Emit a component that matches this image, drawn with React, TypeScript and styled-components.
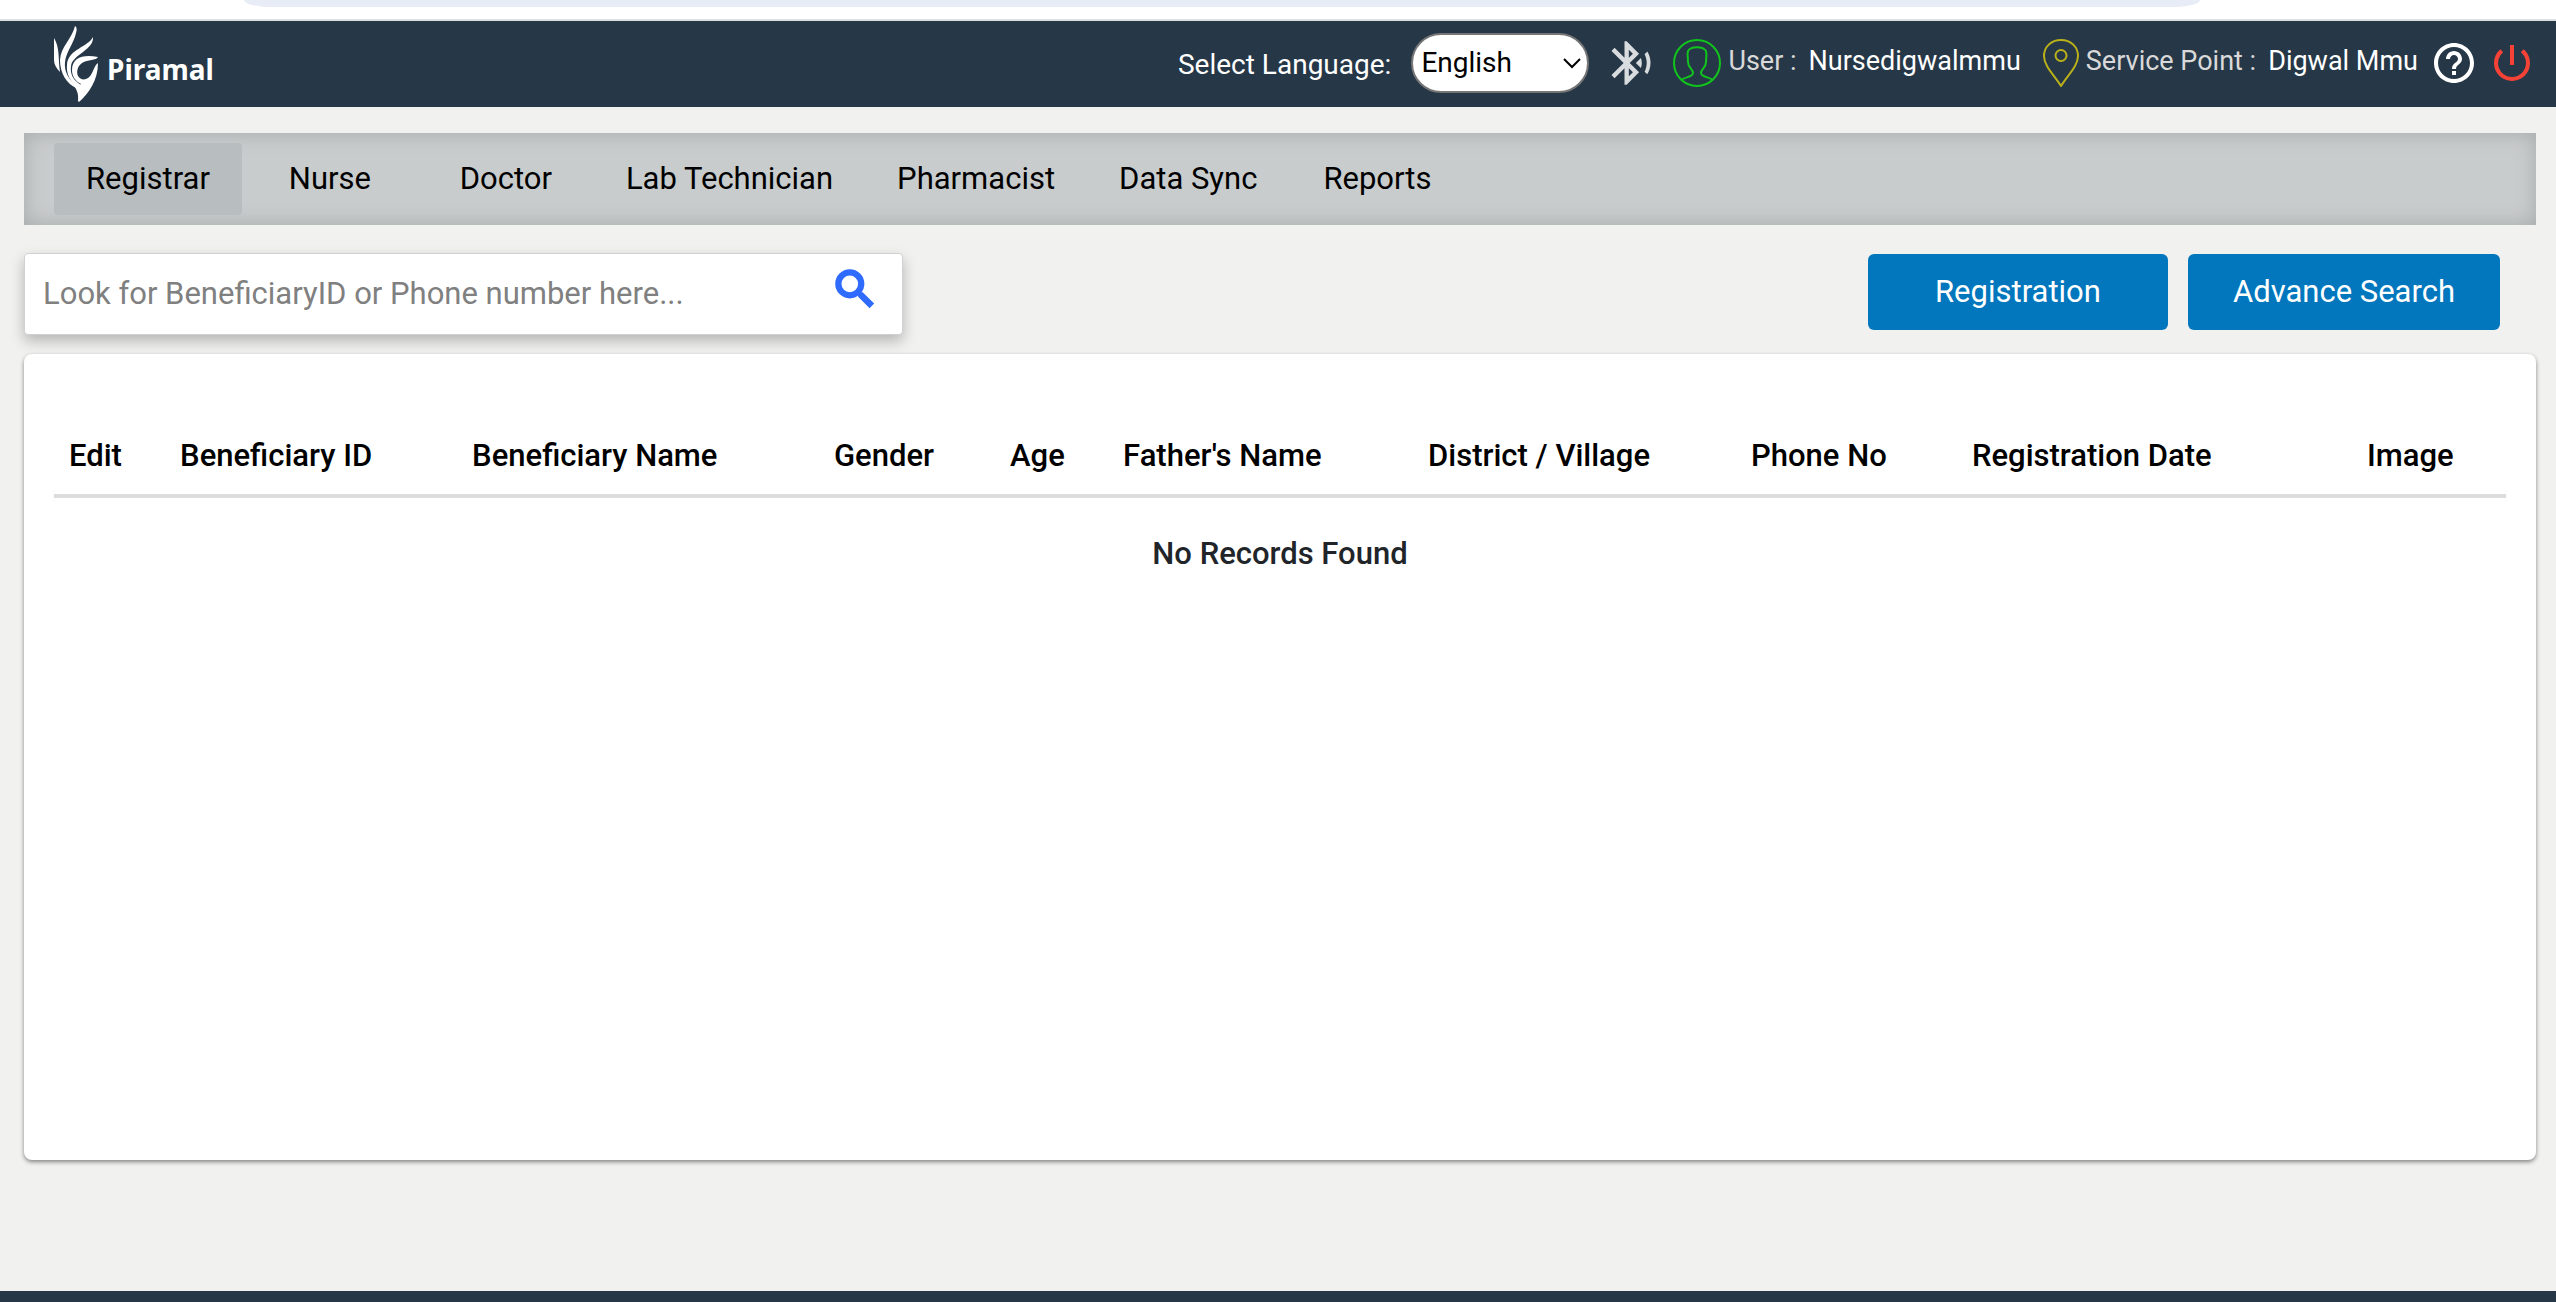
import React, { useState } from "react";
import styled, { createGlobalStyle } from "styled-components";
import {
  MdBluetoothAudio,
  MdHelpOutline,
  MdPowerSettingsNew,
  MdSearch,
} from "react-icons/md";

const navy = "#263747";
const blue = "#0277bd";

const GlobalStyle = createGlobalStyle`
  *, *::before, *::after { box-sizing: border-box; }
  body {
    margin: 0;
    background: #f1f1ef;
    color: #000;
    font-family: Roboto, "Liberation Sans", sans-serif;
    font-size: 31px;
    line-height: 40px;
  }
  button, input, select { font: inherit; margin: 0; }
`;

const Page = styled.div`
  min-height: 100vh;
  display: flex;
  flex-direction: column;
`;

const BrowserStrip = styled.div`
  height: 21px;
  padding: 0 356px 0 244px;
  background: #fff;
  border-bottom: 2px solid #dcdfdf;
`;

const AddressBar = styled.div`
  height: 7px;
  background: #e8ecf6;
  border-radius: 0 0 28px 28px / 0 0 7px 7px;
`;

const Header = styled.header`
  height: 86px;
  padding: 0 20px 0 54px;
  display: flex;
  align-items: center;
  justify-content: space-between;
  background: ${navy};
  color: #fff;
  font-size: 28px;
  line-height: 34px;
`;

const Logo = styled.a`
  display: flex;
  align-items: center;
  gap: 8px;
  color: #fff;
  text-decoration: none;
  font-family: "Noto Sans", "Open Sans", sans-serif;
  font-weight: 700;
`;

const LogoText = styled.span`
  padding-top: 10px;
`;

const Tools = styled.div`
  display: flex;
  align-items: center;
  padding-bottom: 2px;
`;

const LanguageLabel = styled.label`
  margin-right: 20px;
  padding-top: 4px;
`;

const SelectBox = styled.div`
  display: grid;
  grid-template-columns: 178px;
  align-items: center;
  margin-right: 16px;

  & > * { grid-area: 1 / 1; }
  & > svg { justify-self: end; margin-right: 8px; pointer-events: none; }
`;

const LanguageSelect = styled.select`
  height: 60px;
  padding: 0 8px;
  border: 2px solid #767676;
  border-radius: 30px;
  appearance: none;
  background: #fff;
  color: #000;
`;

const ToolButton = styled.button<{ $color: string }>`
  display: flex;
  padding: 0;
  border: 0;
  background: none;
  color: ${(p) => p.$color};
  cursor: pointer;
`;

const Info = styled.div<{ $indent: number }>`
  display: flex;
  align-items: center;
  gap: 7px;
  margin-left: ${(p) => p.$indent}px;
  font-size: 27px;
  white-space: pre;
`;

const InfoText = styled.span`
  padding-bottom: 4px;
  color: #d9d9d9;
`;

const InfoValue = styled.span`
  margin-left: 12px;
  color: #fff;
`;

const Actions = styled.div`
  display: flex;
  gap: 10px;
  margin-left: 12px;
`;

const Main = styled.main`
  flex: 1;
  display: flex;
  flex-direction: column;
  padding: 26px 20px 131px 24px;
`;

const Nav = styled.nav`
  display: flex;
  padding: 10px 30px;
  background: #c9cccc;
  box-shadow: inset 0 0 20px #a4a9ab;
`;

const NavTab = styled.button<{ $active: boolean }>`
  min-width: 176px;
  height: 72px;
  padding: 0 32px;
  border: 0;
  border-radius: 4px;
  background: ${(p) => (p.$active ? "#b8bdbf" : "transparent")};
  color: #000;
  cursor: pointer;
`;

const Toolbar = styled.div`
  display: flex;
  align-items: center;
  justify-content: space-between;
  padding: 28px 0 19px;
`;

const SearchForm = styled.form`
  width: 35%;
  height: 82px;
  display: flex;
  padding: 0 22px 0 18px;
  border: 1px solid #d0d2d2;
  border-radius: 4px;
  background: #fff;
  box-shadow: 0 6px 14px rgba(0, 0, 0, 0.25);
`;

const SearchInput = styled.input`
  flex: 1;
  min-width: 0;
  padding: 0;
  border: 0;
  outline: 0;
  background: none;
  &::placeholder { color: #808080; opacity: 1; }
`;

const SearchButton = styled(ToolButton)`
  align-self: flex-start;
  padding-top: 10px;

  path:last-child { stroke: currentColor; stroke-width: 1; }
`;

const ButtonGroup = styled.div`
  display: flex;
  gap: 20px;
  padding: 0 36px 4px 0;
`;

const PrimaryButton = styled.button`
  min-width: 300px;
  height: 76px;
  padding: 0 45px;
  border: 0;
  border-radius: 6px;
  background: ${blue};
  color: #fff;
  cursor: pointer;
`;

const Card = styled.section`
  flex: 1;
  padding: 72px 30px 30px;
  border-radius: 8px;
  background: #fff;
  box-shadow: 0 2px 4px rgba(0, 0, 0, 0.45);
`;

const Table = styled.table`
  width: 100%;
  table-layout: fixed;
  border-collapse: collapse;
  white-space: nowrap;
`;

const Col = styled.col<{ $share: number }>`
  width: ${(p) => p.$share}%;
`;

const HeadCell = styled.th`
  height: 70px;
  padding: 0 0 8px 15px;
  border-bottom: 4px solid #dcdcdc;
  text-align: left;
  font-weight: 500;
`;

const EmptyCell = styled.td`
  padding: 36px 0;
  text-align: center;
  font-weight: 500;
  color: #212529;
`;

const Footer = styled.footer`
  height: 11px;
  background: ${navy};
`;

const HandMark = () => (
  <svg width="45" height="76" viewBox="0 0 45 76" fill="#fff" aria-hidden="true">
    <path d="M0 12C6 22 4 32 6 46C2 42 0 38 0 34Z" />
    <path d="M21 0C23 1 23 4 22 7C20 17 12 26 11 36C10 45 14 54 25 61C26 62 25 63 24 63C12 58 6 47 6 34C7 20 18 13 21 0Z" />
    <path d="M39 11C40 24 19 28 17 40C16 48 19 54 27 59L25 61C16 57 12 48 13 38C15 23 34 21 39 11Z" />
    <path d="M44 31C42 35 34 33 28 37C24 40 22 45 24 50C27 55 34 55 38 47C40 43 41 39 44 37C44 54 35 67 25 76L24 75C25 67 22 62 18 57C23 60 26 60 27 58C21 55 18 50 18 44C18 31 30 28 44 31Z" />
  </svg>
);

const Chevron = () => (
  <svg width="18" height="12" viewBox="0 0 18 12" fill="none" stroke="#000" strokeWidth="2" aria-hidden="true">
    <path d="M1 2L9 10L17 2" />
  </svg>
);

const UserIcon = () => (
  <svg width="48" height="48" viewBox="0 0 48 48" fill="none" stroke="#11c41c" strokeWidth="2" aria-hidden="true">
    <circle cx="24" cy="24" r="23" />
    <path d="M8 41C12 38 20 38 20 34C20 30 15 29 15 23C15 19 14 15 15 12C18 7 30 7 33 12C34 15 33 19 33 23C33 29 28 30 28 34C28 38 36 38 40 41" />
  </svg>
);

const PinIcon = () => (
  <svg width="36" height="48" viewBox="0 0 36 48" fill="none" stroke="#b9b01a" strokeWidth="2" aria-hidden="true">
    <path d="M18 1C8 1 1 8 1 17C1 27 11 36 18 47C25 36 35 27 35 17C35 8 28 1 18 1Z" />
    <circle cx="18" cy="16.5" r="5.5" />
  </svg>
);

const tabs = ["Registrar", "Nurse", "Doctor", "Lab Technician", "Pharmacist", "Data Sync", "Reports"];

const columns = [
  { title: "Edit", share: 4.53 },
  { title: "Beneficiary ID", share: 11.91 },
  { title: "Beneficiary Name", share: 14.76 },
  { title: "Gender", share: 7.18 },
  { title: "Age", share: 4.61 },
  { title: "Father's Name", share: 12.44 },
  { title: "District / Village", share: 13.17 },
  { title: "Phone No", share: 9.01 },
  { title: "Registration Date", share: 16.11 },
  { title: "Image", share: 6.28 },
];

export default function App() {
  const [active, setActive] = useState("Registrar");
  return (
    <Page>
      <GlobalStyle />
      <BrowserStrip>
        <AddressBar />
      </BrowserStrip>
      <Header>
        <Logo href="#">
          <HandMark />
          <LogoText>Piramal</LogoText>
        </Logo>
        <Tools>
          <LanguageLabel htmlFor="language">Select Language:</LanguageLabel>
          <SelectBox>
            <LanguageSelect id="language" defaultValue="English">
              <option>English</option>
            </LanguageSelect>
            <Chevron />
          </SelectBox>
          <ToolButton type="button" $color="#d9dcdf" aria-label="Bluetooth">
            <MdBluetoothAudio size={52} />
          </ToolButton>
          <Info $indent={16}>
            <UserIcon />
            <InfoText>
              User :<InfoValue>Nursedigwalmmu</InfoValue>
            </InfoText>
          </Info>
          <Info $indent={22}>
            <PinIcon />
            <InfoText>
              Service Point :<InfoValue>Digwal Mmu</InfoValue>
            </InfoText>
          </Info>
          <Actions>
            <ToolButton type="button" $color="#fff" aria-label="Help">
              <MdHelpOutline size={48} />
            </ToolButton>
            <ToolButton type="button" $color="#f44336" aria-label="Log out">
              <MdPowerSettingsNew size={48} />
            </ToolButton>
          </Actions>
        </Tools>
      </Header>
      <Main>
        <Nav>
          {tabs.map((tab) => (
            <NavTab key={tab} type="button" $active={tab === active} onClick={() => setActive(tab)}>
              {tab}
            </NavTab>
          ))}
        </Nav>
        <Toolbar>
          <SearchForm onSubmit={(e) => e.preventDefault()}>
            <SearchInput
              type="text"
              aria-label="Search beneficiary"
              placeholder="Look for BeneficiaryID or Phone number here..."
            />
            <SearchButton type="submit" $color="#2f6bff" aria-label="Search">
              <MdSearch size={50} />
            </SearchButton>
          </SearchForm>
          <ButtonGroup>
            <PrimaryButton type="button">Registration</PrimaryButton>
            <PrimaryButton type="button">Advance Search</PrimaryButton>
          </ButtonGroup>
        </Toolbar>
        <Card>
          <Table>
            <colgroup>
              {columns.map((c) => (
                <Col key={c.title} $share={c.share} />
              ))}
            </colgroup>
            <thead>
              <tr>
                {columns.map((c) => (
                  <HeadCell key={c.title} scope="col">{c.title}</HeadCell>
                ))}
              </tr>
            </thead>
            <tbody>
              <tr>
                <EmptyCell colSpan={columns.length}>No Records Found</EmptyCell>
              </tr>
            </tbody>
          </Table>
        </Card>
      </Main>
      <Footer />
    </Page>
  );
}
